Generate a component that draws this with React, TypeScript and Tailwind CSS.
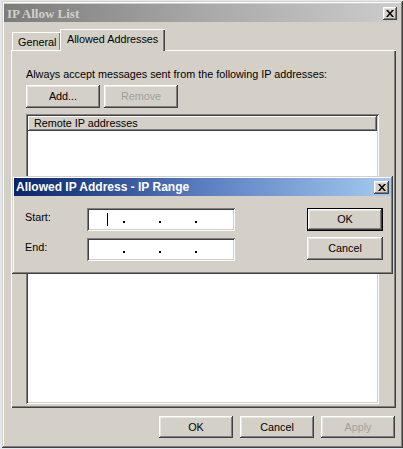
import React from "react";

const RAISED =
  "shadow-[inset_-1px_-1px_0_#404040,inset_1px_1px_0_#ffffff,inset_-2px_-2px_0_#808080,inset_2px_2px_0_#e8e6e0]";
const SUNKEN =
  "shadow-[inset_1px_1px_0_#808080,inset_-1px_-1px_0_#ffffff,inset_2px_2px_0_#404040,inset_-2px_-2px_0_#d4d0c8]";

function XIcon() {
  return (
    <svg width="8" height="7" viewBox="0 0 8 7" className="block">
      <path d="M0 0h2l2 2.5L6 0h2L5 3.5 8 7H6L4 4.5 2 7H0l3-3.5z" fill="#000" />
    </svg>
  );
}

function CloseBtn({ w, h }: { w: string; h: string }) {
  return (
    <div className={`${w} ${h} bg-[#d4d0c8] ${RAISED} flex items-center justify-center`}>
      <XIcon />
    </div>
  );
}

function Btn({
  label,
  disabled,
  cls,
}: {
  label: string;
  disabled?: boolean;
  cls: string;
}) {
  return (
    <div
      className={`${cls} bg-[#d4d0c8] ${RAISED} flex items-center justify-center ${
        disabled ? "text-[#a0a0a0]" : "text-black"
      }`}
    >
      {label}
    </div>
  );
}

function IpField({ cursor }: { cursor?: boolean }) {
  return (
    <div className={`w-[148px] h-[23px] bg-white ${SUNKEN} flex items-center pl-[2px]`}>
      <div className="w-[34px] h-full flex items-center">
        {cursor ? <div className="ml-[18px] w-[1px] h-[13px] bg-black" /> : null}
      </div>
      <div className="w-[2px] h-[2px] bg-black mt-[4px]" />
      <div className="w-[34px]" />
      <div className="w-[2px] h-[2px] bg-black mt-[4px]" />
      <div className="w-[34px]" />
      <div className="w-[2px] h-[2px] bg-black mt-[4px]" />
    </div>
  );
}

export default function App() {
  return (
    <div className="relative w-[403px] h-[449px] overflow-hidden bg-[#e4e8ee] font-['Liberation_Sans',Arial,sans-serif] text-[10.8px] leading-[13px] text-black">
      {/* Main window */}
      <div className="ml-[2px] mt-[1px] w-[401px] h-[447px] bg-[#d4d0c8] shadow-[inset_-1px_-1px_0_#404040,inset_1px_1px_0_#d4d0c8,inset_-2px_-2px_0_#808080,inset_2px_2px_0_#ffffff] pl-[2px] pr-[4px] pt-[3px] flex flex-col">
        {/* Title bar */}
        <div className="h-[18px] flex items-center justify-between bg-gradient-to-r from-[#7c7c7c] via-[#a8a8a8] to-[#cccccc] pl-[3px] pr-[2px]">
          <span className="font-['Liberation_Serif','Times_New_Roman',serif] font-bold text-[13px] text-[#d4d0c8]">
            IP Allow List
          </span>
          <CloseBtn w="w-[14px]" h="h-[13px]" />
        </div>

        {/* Tabs + panel */}
        <div className="ml-[7px] w-[385px] mt-[7px] flex flex-col">
          <div className="flex items-end pl-[1px] h-[21px]">
            <div className="w-[48px] h-[18px] bg-[#d4d0c8] shadow-[inset_1px_1px_0_#ffffff,inset_-1px_0_0_#808080] flex items-center pl-[6px] pt-[2px]">
              General
            </div>
            <div className="relative z-10 -mb-[1px] w-[105px] h-[22px] bg-[#d4d0c8] shadow-[inset_1px_1px_0_#ffffff,inset_-1px_0_0_#404040,inset_-2px_0_0_#808080] flex items-center pl-[7px] pb-[1px]">
              Allowed Addresses
            </div>
          </div>
          <div className="h-[358px] bg-[#d4d0c8] shadow-[inset_1px_1px_0_#ffffff,inset_-1px_-1px_0_#404040,inset_-2px_-2px_0_#808080] pl-[15px] pt-[18px] pb-[4px] flex flex-col">
            <div>Always accept messages sent from the following IP addresses:</div>
            <div className="flex gap-[4px] mt-[4px]">
              <Btn label="Add..." cls="w-[74px] h-[23px]" />
              <Btn label="Remove" disabled cls="w-[74px] h-[23px]" />
            </div>
            <div className={`mt-[6px] w-[353px] flex-1 bg-white ${SUNKEN} p-[2px] flex flex-col`}>
              <div className="h-[15px] bg-[#d4d0c8] shadow-[inset_-1px_-1px_0_#404040,inset_1px_1px_0_#ffffff,inset_-2px_-2px_0_#808080] flex items-center pl-[6px]">
                Remote IP addresses
              </div>
            </div>
          </div>
          {/* Bottom buttons */}
          <div className="flex justify-end gap-[7px] mt-[8px] pr-[1px]">
            <Btn label="OK" cls="w-[74px] h-[22px]" />
            <Btn label="Cancel" cls="w-[74px] h-[22px]" />
            <Btn label="Apply" disabled cls="w-[74px] h-[22px]" />
          </div>
        </div>
      </div>

      {/* Overlay dialog */}
      <div className="absolute left-[12px] top-[176px] w-[381px] h-[98px] bg-[#d4d0c8] shadow-[inset_-1px_-1px_0_#404040,inset_1px_1px_0_#d4d0c8,inset_-2px_-2px_0_#808080,inset_2px_2px_0_#ffffff] p-[2px] flex flex-col">
        <div className="h-[18px] flex items-center justify-between bg-gradient-to-r from-[#0a246a] via-[#5a7ec0] to-[#a6caf0] pl-[2px] pr-[2px]">
          <span className="font-bold text-[12px] text-white">Allowed IP Address - IP Range</span>
          <CloseBtn w="w-[15px]" h="h-[13px]" />
        </div>
        <div className="flex pt-[12px] pl-[11px]">
          <div className="flex flex-col gap-[7px]">
            <div className="flex items-center">
              <div className="w-[62px] pb-[4px]">Start:</div>
              <IpField cursor />
            </div>
            <div className="flex items-center">
              <div className="w-[62px] pb-[4px]">End:</div>
              <IpField />
            </div>
          </div>
          <div className="ml-[72px] flex flex-col gap-[6px]">
            <div className="w-[76px] h-[23px] border border-black">
              <Btn label="OK" cls="w-full h-full" />
            </div>
            <Btn label="Cancel" cls="w-[76px] h-[23px]" />
          </div>
        </div>
      </div>
    </div>
  );
}
